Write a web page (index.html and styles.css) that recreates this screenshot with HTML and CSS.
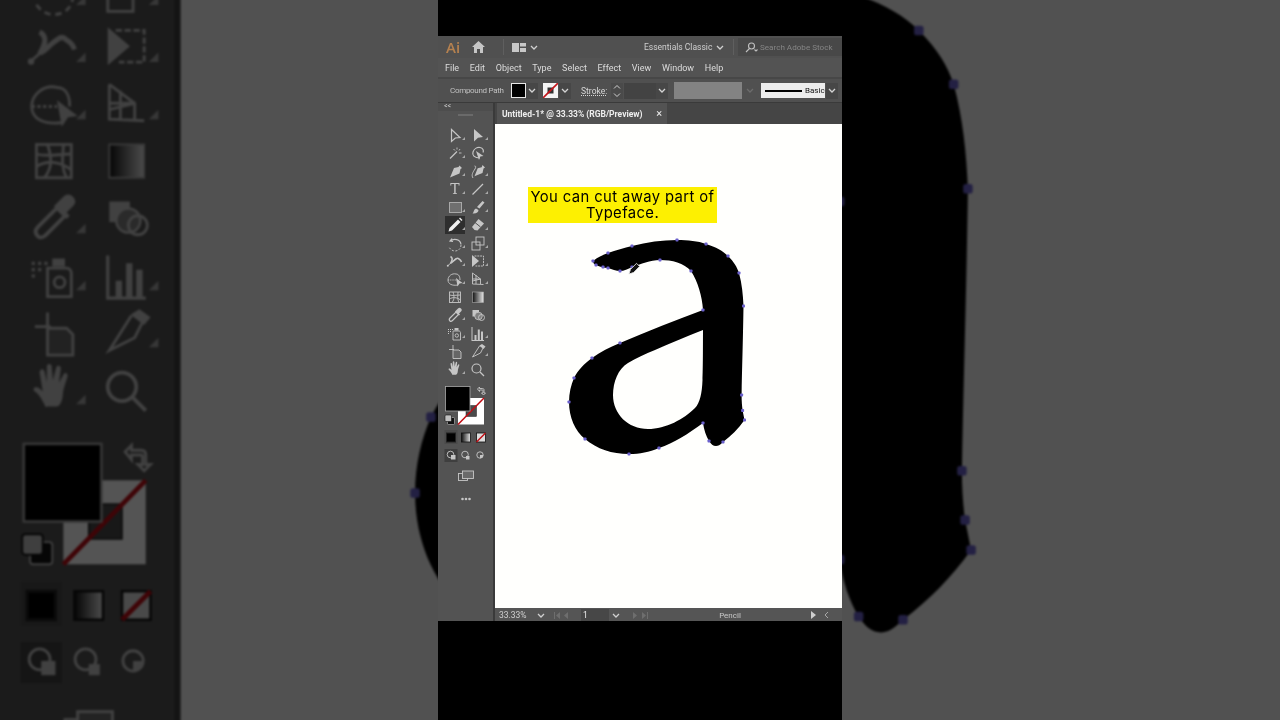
FILE: index.html
```html
<!DOCTYPE html>
<html lang="en">
<head>
    <meta charset="UTF-8">
    <title>Illustrator - Pencil tool</title>
    <link rel="stylesheet" href="styles.css">
</head>
<body>
    <!-- shared drawings, in page coordinates so the backdrop can reuse them -->
    <svg class="defs" width="0" height="0" aria-hidden="true">
        <defs>
            <linearGradient id="grad"><stop offset="0" stop-color="#111"/><stop offset="1" stop-color="#e6e6e6"/></linearGradient>
            <symbol id="chev" viewBox="0 0 8 5"><path d="M1 1l3 3 3-3" class="chev-line"/></symbol>

            <g id="glyph">
                <path class="letter" fill-rule="evenodd" d="M593 261C598 257 603 255 608 253C616 250 624 248 632 246C647 242 662 240 677 240C688 240 698 241 706 244C716 247 723 251 728 256C734 262 737 267 739 273C742 284 743 295 743.500 306C743 340 742 370 741.600 395C741.600 401 742 406 742.600 410.500L744.500 420C738 429 731 436 723 442C720 445 718 446 716 446C713 446 711 444 709 441C706 436 704 430 703 423C688 434 674 443 659 448C649 452 640 454 629 454C612 454 597 449 585 439C575 431 569 417 569 402C569 393 571 385 574 378C578 370 584 364 592 358C600 352 610 347 620 343C648 331 676 320 703 310C702 296 698 282 691 271C684 263 672 260 660 260C650 260 641 264 632 267C628 269 624 271 620 271C616 271 612 269 608 268C604 268 600 267 596 265C594 264 593 263 593 261ZM703 330C687 336 671 343 655 350C645 354 636 358 628 363C618 369 613 382 613 395C613 414 628 429 648 429C666 429 684 419 695 408C700 403 702 393 702.500 380C703 370 703 345 703 330Z"/>
                <g class="anchors">
                    <rect x="591.500" y="259.500" width="3" height="3" rx=".8"/><rect x="606.500" y="251.500" width="3" height="3" rx=".8"/><rect x="630.500" y="244.500" width="3" height="3" rx=".8"/><rect x="675.500" y="238.500" width="3" height="3" rx=".8"/><rect x="704.500" y="242.500" width="3" height="3" rx=".8"/><rect x="726.500" y="254.500" width="3" height="3" rx=".8"/><rect x="737.500" y="271.500" width="3" height="3" rx=".8"/><rect x="742" y="304.500" width="3" height="3" rx=".8"/><rect x="740.100" y="393.500" width="3" height="3" rx=".8"/><rect x="741.100" y="409" width="3" height="3" rx=".8"/><rect x="743" y="418.500" width="3" height="3" rx=".8"/><rect x="721.500" y="440.500" width="3" height="3" rx=".8"/><rect x="707.500" y="439.500" width="3" height="3" rx=".8"/><rect x="701.500" y="421.500" width="3" height="3" rx=".8"/><rect x="657.500" y="446.500" width="3" height="3" rx=".8"/><rect x="627.500" y="452.500" width="3" height="3" rx=".8"/><rect x="583.500" y="437.500" width="3" height="3" rx=".8"/><rect x="567.500" y="400.500" width="3" height="3" rx=".8"/><rect x="572.500" y="376.500" width="3" height="3" rx=".8"/><rect x="590.500" y="356.500" width="3" height="3" rx=".8"/><rect x="618.500" y="341.500" width="3" height="3" rx=".8"/><rect x="701.500" y="308.500" width="3" height="3" rx=".8"/><rect x="689.500" y="269.500" width="3" height="3" rx=".8"/><rect x="658.500" y="258.500" width="3" height="3" rx=".8"/><rect x="630.500" y="265.500" width="3" height="3" rx=".8"/><rect x="618.500" y="269.500" width="3" height="3" rx=".8"/><rect x="606.500" y="266.500" width="3" height="3" rx=".8"/><rect x="601.500" y="265.500" width="3" height="3" rx=".8"/><rect x="594.500" y="263.500" width="3" height="3" rx=".8"/>
                </g>
            </g>

            <g id="tools">
                <rect class="tool-on" x="445" y="216" width="20" height="18"/>
                <!-- flyout corners -->
                <path class="fl corner" d="M462 140h3v-3zM485 140h3v-3zM462 158h3v-3zM462 176h3v-3zM485 176h3v-3zM462 194h3v-3zM485 194h3v-3zM462 212h3v-3zM485 212h3v-3zM462 230h3v-3zM485 230h3v-3zM462 248h3v-3zM485 248h3v-3zM462 266h3v-3zM485 266h3v-3zM462 284h3v-3zM485 284h3v-3zM462 320h3v-3zM462 338h3v-3zM485 338h3v-3zM485 356h3v-3zM462 374h3v-3z"/>

                <path class="ln" d="M451.500 129.500L460 137.500L455.300 138L451.500 141.500Z"/>
                <path class="fl" d="M474 129L483 137L478 137.700L474 141.500Z"/>

                <path class="ln" d="M450 158.500L457 151.500"/><path class="ln thin" d="M457 147.500v2M453.500 149l1.500 1.500M460 149l-1 1.500M459 153h2.500"/>
                <path class="ln" d="M480 158c-6 0-8-3-7-6s4-5 7-4.500 4 3 3 5"/><path class="fl" d="M476 151l7.500 5-3.200.5-1.300 3.500z"/>

                <path class="fl" d="M459.500 165.500l2.500 2.500-1.500 1-1 4.500-6 2.500-3.500 1.500 1.500-3.500 2.500-6 4.500-1z"/>
                <path class="fl" d="M482.500 165l2.500 2.500-1.500 1-1 4.500-5 2-3 1.200 1.200-3 2-5 4-.9z"/><path class="ln thin" d="M473 178c-2-3 0-6 2-9 1-2 1-3-.5-3"/>

                <text class="tool-t" x="455" y="194">T</text>
                <path class="ln" d="M472.500 194.500L483 184"/>

                <rect class="tool-rect" x="449.500" y="202.500" width="12" height="10"/>
                <path class="fl" d="M482.500 201l2 1.500-5 6-2.500-1.500zM476 208.500l2.500 1.500c0 2.500-2.500 4-6 3.500 1.500-1 1-4 3.500-5z"/>

                <path class="pencil" d="M458 219.500l2.500 2.500-8.500 8.500-3.500 1 1-3.500zM459 218.500l1-1 2.500 2.500-1 1z"/>
                <path class="fl" d="M478.500 219l5.500 4.500-6.500 7-3-.5-2.500-3z"/><path class="eraser-cut" d="M475 222.500l5.500 4.500"/>

                <path class="ln" d="M452 238.500l-2 2.500 3 .5M450.500 241c3-3 10-2 10.500 3.500"/><path class="ln thin" stroke-dasharray="2 1.500" d="M461 245c0 4-3 6-6 6s-5-2-6-4"/>
                <rect class="ln thin" x="472" y="242" width="8" height="8"/><rect class="ln thin" x="476" y="237" width="8" height="8"/>

                <path class="ln warp" d="M450.500 256.500c2 1 2 3 1 5l-1 2M451 263c2-1 3-3 5-4c1-1 2-1 3 0c1 .5 2 1.500 2.500 3"/><path class="ln thin" d="M448 265.500l8-7"/><circle class="fl" cx="447.800" cy="265.800" r="1"/>
                <path class="fl" d="M472 255l7 6-7 6z"/><path class="ln thin" stroke-dasharray="2 .8" d="M474.500 256h9v10h-8"/>

                <path class="ln thin" d="M458 285c-6 1-10-1-10-5s4-7 8-6c3 0 4 3 4 6"/><path class="ln thin" stroke-dasharray="1 .8" d="M448 280h8"/><path class="fl" d="M456 278l6.500 5-3 .4-2 3z"/>
                <path class="ln thin" d="M472.500 273v11l11 .5M472.500 273l8 6v5M476 275v9M472.500 279h8M472.500 281l8-2"/>

                <rect class="ln thin" x="449.500" y="292" width="11" height="10.500"/><path class="ln thin" d="M449.500 299c3-2 7-2 11 1M453 292c1 3 2 7-1 10.500M458 292c0 3-1 7 1 10.500M449.500 295c3 1 7 0 11 0"/>
                <rect class="grad-box" x="472.500" y="292" width="11" height="10.500"/>

                <path class="ln" d="M450 321c-1-1-1-2 0-3l6-6 2.500 2.500-6 6c-1 1-2 1-2.500.5z"/><path class="fl" d="M456 310.500l2-2c1-1 2-1 3 0s1 2 0 3l-2 2 1 1-1 1-4-4 1-1z"/>
                <rect class="fl" x="472.500" y="310" width="6.500" height="6.500"/><circle class="blend-mid" cx="478.500" cy="316" r="3.800"/><circle class="ln thin" cx="481.500" cy="317.500" r="3"/>

                <path class="ln thin" d="M453 331h6c1 0 1.500 1 1.500 1.500v7.500h-7.500v-7.500c0-.5 0-1.500 0-1.500z"/><rect class="fl" x="454.500" y="328" width="4" height="2.500"/><circle class="ln thin" cx="456.800" cy="335.500" r="1.700"/><path class="fl" d="M448 329h1v1h-1zM450 329h1v1h-1zM452 329h1v1h-1zM448 331h1v1h-1zM450 331h1v1h-1zM448 333h1v1h-1z"/>
                <path class="fl" d="M471.500 327h1v13h11.500v1h-12.500zM474.500 335h2v5h-2zM477.800 329.500h2v10.500h-2zM481 331.500h2v8.500h-2z"/>

                <path class="ln thin" d="M453 345v5M449 349.500h5"/><path class="fl dim-fl" d="M453 350h6l2 2v6.500h-8z"/><path class="ln thin" d="M453 350h6l2 2v6.500h-8z"/>
                <path class="fl" d="M479.500 345.500l2.500-1.500 3.500 2.500-2 2.500-4-3z"/><path class="ln thin" d="M479.500 346l-7 11 8-4 2.500-5"/>

                <path class="fl" d="M452.500 375c-1-2-2-4-3.500-5-1-1 0-2 1.500-1l1 1-1-6c0-1 1-1.500 1.500-.5l.8 3.500 0-5c0-1 1.500-1 1.500 0l.4 4.500 1-4c.3-1 1.500-.8 1.500.2l-.6 4.500 1.400-2.500c.5-1 1.500-.5 1.300.5-.5 2-1.500 4-1.500 6-.2 2-1 3.500-2 3.500h-3z"/>
                <circle class="ln" cx="476.500" cy="368.500" r="4.500"/><path class="ln" d="M480 372l4 4"/>

                <!-- fill and stroke -->
                <rect class="stroke-swatch" x="458" y="398" width="26" height="26.500"/>
                <rect class="stroke-hole" x="466" y="405.500" width="10.500" height="11"/>
                <path class="red" d="M458 424.500L484 398"/>
                <rect class="fill-swatch" x="445.500" y="386.500" width="24.500" height="24.500"/>
                <path class="ln thin" d="M477.500 389l2-2v1.500h3c1 0 1.500 .5 1.500 1.500v3h1.500l-2 2-2-2h1.500v-2.500c0-.5 0-.5-.5-.5h-3v1.500z"/>
                <rect class="mini-back" x="447.500" y="417.500" width="7" height="7" rx="1"/><rect class="mini-front" x="445" y="415" width="6.500" height="6.500" rx="1"/>

                <rect class="cell" x="444.500" y="430" width="13" height="14"/>
                <rect class="mode-black" x="446.500" y="433" width="9" height="9"/>
                <rect class="grad-mode" x="461.500" y="433" width="9" height="9"/>
                <rect class="mode-none" x="476.500" y="433" width="9" height="9"/><path class="red" d="M476.500 442l9-9"/>

                <rect class="tool-on-soft" x="444.500" y="449" width="13" height="13"/>
                <circle class="ln thin" cx="450.500" cy="454.500" r="3.300"/><rect class="fl" x="451" y="455" width="4.500" height="4.500"/>
                <circle class="ln thin" cx="465" cy="454.500" r="3.300"/><rect class="fl" x="466" y="456" width="3.500" height="3.500"/>
                <circle class="ln thin" cx="480" cy="455" r="3.200"/><path class="fl" d="M480 455h3.200a3.200 3.200 0 0 1-3.200 3.200z"/>

                <rect class="ln thin" x="458.500" y="473.500" width="9" height="7"/><rect class="screen" x="462.500" y="471" width="11" height="7.500"/>
                <circle class="fl" cx="462.500" cy="499" r="1.300"/><circle class="fl" cx="466" cy="499" r="1.300"/><circle class="fl" cx="469.500" cy="499" r="1.300"/>
            </g>
        </defs>
    </svg>

    <!-- blurred zoomed copy of the recording on both sides, a bit oversized so the blur has no edge -->
    <svg class="backdrop" viewBox="434.840 243.240 410.310 233.560" preserveAspectRatio="none" aria-hidden="true">
        <rect class="bd-panel" x="430" y="100" width="65" height="530"/>
        <rect class="bd-edge" x="493" y="100" width="2" height="530"/>
        <rect class="bd-canvas" x="495" y="100" width="355" height="530"/>
        <use href="#tools"/>
        <use href="#glyph"/>
    </svg>

    <main class="video">
        <div class="app">
            <header class="topbar">
                <span class="ai-logo">Ai</span>
                <svg class="home" viewBox="0 0 13 12"><path d="M6.500 0L13 6h-2v6H8V8H5v4H2V6H0z"/></svg>
                <span class="sep"></span>
                <svg class="workspace" viewBox="0 0 14 9"><path d="M0 0h7v9H0zM8 0h6v3.500H8zM8 5h6v4H8z"/></svg>
                <svg class="chev c-light"><use href="#chev"/></svg>
                <span class="essentials">Essentials Classic</span>
                <svg class="chev c-light"><use href="#chev"/></svg>
                <span class="sep sep-right"></span>
                <div class="search">
                    <svg class="search-icon" viewBox="0 0 13 11"><circle cx="6.500" cy="4" r="3"/><path d="M4.500 6.500L1 10M9.500 7.500l1.500 1.500 1.500-1.500"/></svg>
                    <span>Search Adobe Stock</span>
                </div>
            </header>

            <nav class="menubar">
                <span>File</span><span>Edit</span><span>Object</span><span>Type</span><span>Select</span><span>Effect</span><span>View</span><span>Window</span><span>Help</span>
            </nav>

            <div class="optionbar">
                <span class="opt-label">Compound Path</span>
                <span class="swatch swatch-fill"></span>
                <span class="chev-box"><svg class="chev"><use href="#chev"/></svg></span>
                <svg class="swatch-stroke" viewBox="0 0 15 15"><rect width="15" height="15" fill="#f4f4f4"/><rect x="4.500" y="4.500" width="6" height="6" fill="#333"/><path d="M0 15L15 0" stroke="#c4161c" stroke-width="1.600"/></svg>
                <span class="chev-box chev-after-stroke"><svg class="chev"><use href="#chev"/></svg></span>
                <span class="stroke-label">Stroke:</span>
                <span class="stepper"><svg viewBox="0 0 8 14"><path d="M1 4.500l3-3 3 3M1 9.500l3 3 3-3"/></svg></span>
                <span class="value-box"></span>
                <span class="chev-box"><svg class="chev"><use href="#chev"/></svg></span>
                <span class="opacity-box"></span>
                <svg class="chev c-faint"><use href="#chev"/></svg>
                <span class="stroke-preview"><i></i>Basic</span>
                <span class="chev-box"><svg class="chev"><use href="#chev"/></svg></span>
            </div>

            <div class="workarea">
                <aside class="toolbox">
                    <div class="collapse">&lt;&lt;</div>
                    <span class="grip"></span>
                    <svg class="tools-svg" viewBox="438 124 56 497"><use href="#tools"/></svg>
                </aside>

                <section class="document">
                    <div class="tabbar">
                        <div class="tab"><span>Untitled-1* @ 33.33% (RGB/Preview)</span><b>×</b></div>
                    </div>
                    <div class="canvas">
                        <svg class="artwork" viewBox="495 124 347 484">
                            <use href="#glyph"/>
                            <g transform="translate(633.500 269.500) rotate(45)">
                                <path class="cursor" d="M-2.200 -6.500h4.400v8.500l-2.200 4.500-2.200-4.500z"/>
                            </g>
                        </svg>
                        <p class="caption">You can cut away part of<br>Typeface.</p>
                    </div>
                    <footer class="statusbar">
                        <span class="zoom-val">33.33%</span>
                        <svg class="chev c-light"><use href="#chev"/></svg>
                        <svg class="nav nav-first" viewBox="0 0 18 7"><path d="M1 0h1v7H1zM7 0v7L3 3.500zM15 0v7l-4-3.500z"/></svg>
                        <span class="page-box">1</span>
                        <svg class="chev c-light"><use href="#chev"/></svg>
                        <svg class="nav nav-last" viewBox="0 0 18 7"><path d="M2 0v7l4-3.500zM11 0v7l4-3.500zM16 0h1v7h-1z"/></svg>
                        <span class="tool-name">Pencil</span>
                        <svg class="play" viewBox="0 0 5 8"><path d="M0 0l5 4-5 4z"/></svg>
                        <svg class="back" viewBox="0 0 5 8"><path d="M4 1L1 4l3 3"/></svg>
                    </footer>
                </section>
            </div>
        </div>
    </main>
</body>
</html>
```

FILE: styles.css
```css
:root {
    --panel: #535353;
    --panel-dark: #484848;
    --line: #3a3a3a;
    --text: #dcdcdc;
    --icon: #c6c6c6;
}
* {
    box-sizing: border-box;
}
body {
    margin: 0;
    height: 720px;
    overflow: hidden;
    background: #000;
    font-family: Roboto, "Liberation Sans", sans-serif;
    font-size: 9px;
    color: var(--text);
}
.defs {
    position: absolute;
}

/* backdrop */
.backdrop {
    position: absolute;
    left: -10px;
    top: -10px;
    width: 1300px;
    height: 740px;
    filter: brightness(.33) blur(1.2px);
}
.bd-panel { fill: var(--panel); }
.bd-edge { fill: #3c3c3c; }
.bd-canvas { fill: #f6f6f6; }

/* video column */
.video {
    position: relative;
    width: 404px;
    height: 720px;
    margin: 0 auto;
    padding-top: 36px;
    background: #000;
}
.app {
    height: 585px;
    display: flex;
    flex-direction: column;
    background: var(--panel);
    filter: blur(.3px);
}

/* top bar */
.topbar {
    height: 22px;
    display: flex;
    align-items: center;
    padding-left: 8px;
    background: #505050;
}
.topbar > * {
    flex: none;
}
.ai-logo {
    width: 26px;
    font-family: "Open Sans", sans-serif;
    font-size: 15px;
    font-weight: 600;
    color: #b5814f;
}
.home {
    width: 13px;
    height: 12px;
    fill: var(--icon);
}
.sep {
    width: 1px;
    height: 16px;
    margin: 0 8px 0 18px;
    background: #5f5f5f;
}
.sep-right {
    margin: 0 4px 0 9px;
}
.workspace {
    width: 14px;
    height: 9px;
    fill: #c8c8c8;
}
.chev {
    width: 8px;
    height: 5px;
    flex: none;
}
.chev-line {
    fill: none;
    stroke: currentColor;
    stroke-width: 1.3;
}
.c-light { color: #d0d0d0; }
.c-faint { color: #6c6c6c; margin-left: 4px; }
.topbar .workspace + .chev { margin-left: 4px; }
.essentials {
    width: 67px;
    margin-left: 106px;
    margin-right: 5px;
    font-size: 8.500px;
    white-space: nowrap;
    color: #cfcfcf;
}
.search {
    width: 104px;
    height: 18px;
    display: flex;
    align-items: center;
    gap: 2px;
    padding-left: 7px;
    overflow: hidden;
    background: var(--panel-dark);
    font-size: 8.100px;
    color: #858585;
    white-space: nowrap;
}
.search-icon {
    width: 13px;
    height: 11px;
    flex: none;
    fill: none;
    stroke: #c0c0c0;
    stroke-width: 1.100;
}

/* menu */
.menubar {
    height: 21px;
    display: flex;
    align-items: center;
    gap: 10.700px;
    padding-left: 7px;
    border-bottom: 2px solid #474747;
    font-size: 9px;
    color: #dcdcdc;
}

/* options */
.optionbar {
    height: 24px;
    display: flex;
    align-items: center;
    padding-left: 12px;
    background: #505050;
    border-bottom: 1px solid var(--line);
}
.opt-label {
    width: 61px;
    flex: none;
    font-size: 8px;
    letter-spacing: -.3px;
    white-space: nowrap;
    color: #c0c0c0;
}
.swatch {
    width: 15px;
    height: 15px;
    flex: none;
}
.swatch-fill {
    background: #000;
    border: 1px solid #e8e8e8;
}
.swatch-stroke {
    width: 15px;
    height: 15px;
    flex: none;
    margin-left: 5px;
}
.chev-box {
    width: 12px;
    height: 16px;
    flex: none;
    display: flex;
    align-items: center;
    justify-content: center;
    background: #474747;
    color: #d4d4d4;
}
.chev-after-stroke {
    margin-left: 1px;
}
.stroke-label {
    width: 25px;
    flex: none;
    margin: 0 5px 0 10px;
    font-size: 8.500px;
    white-space: nowrap;
    text-decoration: underline dotted;
    color: #d8d8d8;
}
.stepper {
    width: 12px;
    height: 16px;
    flex: none;
    background: #4a4a4a;
}
.stepper svg {
    display: block;
    width: 8px;
    height: 14px;
    margin: 1px auto;
    fill: none;
    stroke: #d0d0d0;
}
.value-box {
    width: 32px;
    height: 16px;
    flex: none;
    margin-left: 1px;
    background: #434343;
}
.opacity-box {
    width: 68px;
    height: 17px;
    flex: none;
    margin-left: 6px;
    background: #838383;
}
.stroke-preview {
    width: 64px;
    height: 15px;
    flex: none;
    margin-left: 7px;
    display: flex;
    align-items: center;
    gap: 3px;
    padding-left: 4px;
    background: #ececec;
    font-size: 8px;
    color: #111;
}
.stroke-preview i {
    width: 37px;
    height: 2px;
    background: #000;
}
.optionbar .chev-box:last-child {
    margin-left: 1px;
}

/* work area */
.workarea {
    flex: 1;
    min-height: 0;
    display: flex;
}
.toolbox {
    position: relative;
    width: 57px;
    flex: none;
    border-right: 2px solid var(--line);
}
.collapse {
    height: 8px;
    padding-left: 6px;
    background: #4d4d4d;
    font-size: 7px;
    line-height: 7px;
    color: #cfcfcf;
}
.grip {
    position: absolute;
    left: 20px;
    top: 11px;
    width: 15px;
    height: 2px;
    background: #6a6a6a;
}
.tools-svg {
    position: absolute;
    left: 0;
    top: 21px;
    width: 56px;
    height: 497px;
}
.document {
    flex: 1;
    min-width: 0;
    display: flex;
    flex-direction: column;
}
.tabbar {
    height: 21px;
    padding-left: 2px;
    background: #454545;
}
.tab {
    width: 170px;
    height: 21px;
    display: flex;
    align-items: center;
    justify-content: space-between;
    padding: 0 5px 0 5px;
    background: var(--panel);
    font-size: 8.500px;
    font-weight: 700;
    color: #eee;
    white-space: nowrap;
}
.tab b {
    font-size: 11px;
    font-weight: 400;
}
.canvas {
    position: relative;
    height: 484px;
    background: #fffffd;
}
.artwork {
    display: block;
    width: 347px;
    height: 484px;
}
.caption {
    position: absolute;
    left: 33px;
    top: 63px;
    width: 189px;
    height: 36px;
    margin: 0;
    padding-top: 2px;
    background: #fdf001;
    font-family: Inter, "Liberation Sans", sans-serif;
    font-size: 14.800px;
    line-height: 16px;
    letter-spacing: .4px;
    text-align: center;
    color: #000;
}
.statusbar {
    flex: 1;
    display: flex;
    align-items: center;
    padding: 1px 0 0 4px;
    background: #555;
    font-size: 8.500px;
    color: #d0d0d0;
}
.zoom-val {
    width: 38px;
}
.nav {
    width: 18px;
    height: 7px;
    flex: none;
    fill: #6e6e6e;
}
.nav-first {
    margin: 0 10px 0 8px;
}
.page-box {
    width: 28px;
    height: 12px;
    padding-left: 2px;
    margin-right: 3px;
    line-height: 12px;
    background: #474747;
    color: #eee;
}
.nav-last {
    margin: 0 0 0 11px;
}
.tool-name {
    width: 162px;
    text-align: center;
    font-size: 8px;
    color: #c8c8c8;
}
.play {
    width: 5px;
    height: 8px;
    fill: #cfcfcf;
}
.back {
    width: 5px;
    height: 8px;
    margin-left: 8px;
    fill: none;
    stroke: #a8a8a8;
}

/* artwork */
.letter { fill: #000; }
.anchors rect { fill: #6a60cc; }
.cursor {
    fill: #111;
    stroke: #eee;
    stroke-width: .8;
}

/* tool icons */
.ln {
    fill: none;
    stroke: var(--icon);
    stroke-width: 1.200;
}
.thin { stroke-width: .9; }
.warp { stroke-width: 1.600; }
.fl { fill: var(--icon); }
.pencil { fill: #f0f0f0; }
.corner { fill: #a8a8a8; }
.dim-fl { fill: #666; }
.tool-on { fill: #2e2e2e; }
.tool-on-soft { fill: #3f3f3f; }
.tool-t {
    font-family: "DejaVu Serif", "Liberation Serif", serif;
    font-size: 14px;
    text-anchor: middle;
    fill: var(--icon);
}
.tool-rect {
    fill: #6f6f6f;
    stroke: #a8a8a8;
}
.eraser-cut {
    fill: none;
    stroke: #535353;
}
.grad-box {
    fill: url(#grad);
    stroke: #aaa;
    stroke-width: .6;
}
.blend-mid { fill: #808080; stroke: var(--icon); stroke-width: .8; }
.stroke-swatch { fill: #fff; }
.stroke-hole { fill: #4a4a4a; stroke: #222; stroke-width: .5; }
.fill-swatch { fill: #000; stroke: #a8a8a8; stroke-width: .8; }
.red {
    fill: none;
    stroke: #c00d14;
    stroke-width: 1.500;
}
.mini-back { fill: #111; stroke: #c0c0c0; stroke-width: .6; }
.mini-front { fill: #c0c0c0; stroke: #111; stroke-width: .6; }
.cell { fill: #4a4a4a; }
.mode-black { fill: #000; stroke: #222; }
.grad-mode { fill: url(#grad); stroke: #111; stroke-width: .8; }
.mode-none { fill: #ddd; stroke: #111; stroke-width: .8; }
.screen { fill: #6a6a6a; stroke: var(--icon); stroke-width: .9; }
```
